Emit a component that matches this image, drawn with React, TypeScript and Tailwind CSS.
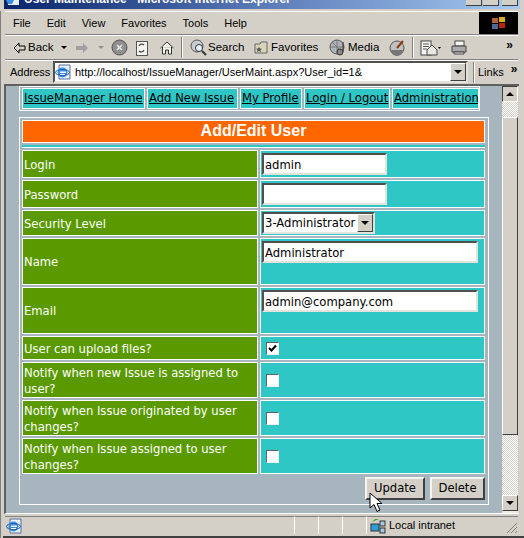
import React from 'react';

const ui = "font-['Liberation_Sans',sans-serif]";

function Sep() {
  return <div className="h-[21px] w-[2px] shrink-0 border-l border-r border-l-[#808080] border-r-white" />;
}

function IeIcon({ size = 16 }: { size?: number }) {
  return (
    <svg width={size} height={size} viewBox="0 0 16 16" className="shrink-0">
      <path d="M4 1h11v14H4z" fill="#e8eef8" stroke="#5a6f9a" />
      <circle cx="7.500" cy="8.500" r="5" fill="#3a8fe0" />
      <ellipse cx="7.500" cy="8.500" rx="7" ry="3" fill="none" stroke="#1c5fc0" />
      <rect x="5" y="7.500" width="6" height="1.500" fill="#fff" />
      <path d="M5 10.500h5" stroke="#fff" />
    </svg>
  );
}

function ToolbarIcons() {
  return (
    <div className="flex items-center h-[23px] pl-[8px] text-black">
      <svg width="13" height="12" viewBox="0 0 13 12" className="mr-[2px] shrink-0">
        <path d="M6 1 1 6l5 5V8h6V4H6z" fill="#d4d0c8" stroke="#000" />
      </svg>
      <span className="w-[24px]">Back</span>
      <span className="ml-[9px] mr-[8px] border-x-[3px] border-t-[3px] border-x-transparent border-t-black" />
      <svg width="14" height="12" viewBox="0 0 14 12" className="mr-[9px] shrink-0">
        <path d="M8 1l5 5-5 5V8H1V4h7z" fill="#a0a0a0" />
      </svg>
      <span className="mr-[7px] border-x-[3px] border-t-[3px] border-x-transparent border-t-[#909090]" />
      <svg width="17" height="17" viewBox="0 0 17 17" className="mr-[8px] shrink-0">
        <circle cx="8.500" cy="8.500" r="7.500" fill="#8f8f8f" stroke="#555" />
        <path d="M6 6l5 5M11 6l-5 5" stroke="#e8e8e8" strokeWidth="1.600" />
      </svg>
      <svg width="13" height="16" viewBox="0 0 13 16" className="mr-[11px] shrink-0">
        <rect x="0.500" y="1.500" width="11" height="14" fill="#f4f4f0" stroke="#555" />
        <path d="M3 6a3 3 0 0 1 5-1M8 10a3 3 0 0 1-5 1" fill="none" stroke="#4a4a4a" strokeWidth="1.300" />
      </svg>
      <svg width="14" height="15" viewBox="0 0 14 15" className="mr-[7px] shrink-0">
        <path d="M.5 8 7 2l6.500 6M2.500 7v7h3v-4h3v4h3V7" fill="#f4f4ec" stroke="#333" />
      </svg>
      <Sep />
      <svg width="17" height="17" viewBox="0 0 17 17" className="ml-[7px] mr-[1px] shrink-0">
        <circle cx="7" cy="7" r="6" fill="#c8ccd0" stroke="#555" />
        <circle cx="9" cy="9" r="3.500" fill="#e8f0f8" stroke="#333" />
        <path d="M12 12l4 4" stroke="#333" strokeWidth="2" />
      </svg>
      <span className="w-[36px]">Search</span>
      <svg width="15" height="15" viewBox="0 0 15 15" className="ml-[10px] mr-[2px] shrink-0">
        <path d="M1 4h5l1-2h6v11H1z" fill="#d8d4b8" stroke="#666" />
        <path d="M5 7l1 1.500 2 .2-1.500 1.300.5 2-2-1-2 1 .5-2L2 8.700l2-.2z" fill="#555" />
      </svg>
      <span className="w-[46px]">Favorites</span>
      <svg width="18" height="18" viewBox="0 0 18 18" className="ml-[12px] mr-[1px] shrink-0">
        <circle cx="8" cy="8" r="7" fill="#b0b4b8" stroke="#555" />
        <path d="M8 1v14M1 8h14M3 3l10 10" stroke="#777" />
        <circle cx="11" cy="13" r="3" fill="#888" stroke="#333" />
        <path d="M14 13V3" stroke="#333" />
      </svg>
      <span className="w-[28px]">Media</span>
      <svg width="17" height="17" viewBox="0 0 17 17" className="ml-[13px] mr-[6px] shrink-0">
        <circle cx="8" cy="9" r="7" fill="#c0c0c0" stroke="#555" />
        <path d="M8 9l6-7" stroke="#8a3a10" strokeWidth="2" />
        <path d="M2 11a6 6 0 0 0 12 0z" fill="#777" />
      </svg>
      <Sep />
      <svg width="21" height="16" viewBox="0 0 21 16" className="ml-[6px] mr-[10px] shrink-0">
        <rect x="1" y="1" width="10" height="14" fill="#f4f4f0" stroke="#444" />
        <path d="M3 4h6M3 6.500h6M3 9h4" stroke="#555" />
        <path d="M7 10l5-5 5 5v5H7z" fill="#e8e8e0" stroke="#444" />
        <path d="M18 7h3l-1.500 2z" />
      </svg>
      <svg width="16" height="15" viewBox="0 0 16 15" className="shrink-0">
        <rect x="4" y="1" width="9" height="5" fill="#f4f4f0" stroke="#444" />
        <path d="M1 6h14v6H1z" fill="#aaa" stroke="#444" />
        <path d="M3 12h10v2H3z" fill="#e8e8e8" stroke="#444" />
      </svg>
      <span className="ml-auto mr-[6px] mt-[-6px] text-[12px] font-bold tracking-[-1px]">»</span>
    </div>
  );
}

function DropButton({ className }: { className: string }) {
  return (
    <div className={`flex items-center justify-center bg-[#d4d0c8] border border-t-white border-l-white border-r-[#404040] border-b-[#404040] ${className}`}>
      <span className="border-x-[4px] border-t-[4px] border-x-transparent border-t-black" />
    </div>
  );
}

function NavCell({ children, className }: { children: React.ReactNode; className: string }) {
  return (
    <a className={`block h-[21px] shrink-0 border border-white bg-[#2fc6c6] pl-[1px] text-black underline whitespace-nowrap overflow-hidden leading-[18px] ${className}`}>{children}</a>
  );
}

function Row({ label, h, children, align = 'items-center' }: { label: React.ReactNode; h: string; children?: React.ReactNode; align?: string }) {
  return (
    <div className={`flex gap-[2px] ${h}`}>
      <div className="w-[236px] flex items-center border border-white bg-[#5a9a00] pl-[1px] pt-[1px] text-white leading-[16px]">
        <div>{label}</div>
      </div>
      <div className={`flex-1 flex ${align} border border-white bg-[#2fc6c6] pl-[1px]`}>{children}</div>
    </div>
  );
}

function Field({ value, className }: { value?: string; className: string }) {
  return (
    <div className={`h-[22px] border-2 border-t-[#505050] border-l-[#505050] border-r-[#e4e2dc] border-b-[#e4e2dc] bg-white pl-[1px] text-black leading-[20px] ${className}`}>{value}</div>
  );
}

function Check({ checked }: { checked?: boolean }) {
  return (
    <div className="ml-[4px] w-[13px] h-[13px] border border-t-[#606060] border-l-[#606060] border-r-[#f0f0f0] border-b-[#f0f0f0] bg-white flex items-center justify-center">
      {checked && (
        <svg width="9" height="9" viewBox="0 0 9 9">
          <path d="M1 4l2.500 2.500L8 1.500" fill="none" stroke="#000" strokeWidth="2" />
        </svg>
      )}
    </div>
  );
}

function PushButton({ children, className }: { children: React.ReactNode; className: string }) {
  return (
    <div className={`h-[23px] border-2 border-t-[#f4f4f0] border-l-[#f4f4f0] border-r-[#404040] border-b-[#404040] bg-[#d4d0c8] text-black text-center leading-[19px] ${className}`}>{children}</div>
  );
}

export default function App() {
  return (
    <div className={`relative w-[524px] h-[538px] overflow-hidden bg-[#d4d0c8] flex flex-col text-[11px] ${ui}`}>
      {/* title bar, cut off by the top of the picture */}
      <div className="h-[9px] shrink-0 mx-[4px] flex items-start bg-gradient-to-r from-[#0a246a] via-[#5a7ab8] to-[#a6caf0] overflow-hidden">
        <svg width="15" height="6" viewBox="0 10 15 6" className="ml-[1px] mr-[4px] shrink-0">
          <path d="M3 10h11v5H3z" fill="#e8eef8" />
          <path d="M1 10h8l-2 4H3z" fill="#3a8fe0" />
        </svg>
        <span className="mt-[-8px] text-[12px] leading-[14px] font-bold text-white whitespace-nowrap">User Maintenance - Microsoft Internet Explorer</span>
        <div className="ml-auto flex gap-[1px] mr-[2px]">
          <div className="w-[16px] h-[6px] bg-[#d4d0c8] border-b border-r border-[#404040]" />
          <div className="w-[16px] h-[6px] bg-[#d4d0c8] border-b border-r border-[#404040]" />
          <div className="w-[16px] h-[6px] ml-[2px] bg-[#d4d0c8] border-b border-r border-[#404040]" />
        </div>
      </div>
      <div className="h-[2px] shrink-0" />

      {/* menu */}
      <div className="h-[24px] shrink-0 flex ml-[5px] mr-[6px] border-t border-t-white border-b border-b-[#808080]">
        <div className="flex flex-1 items-center gap-[16px] pl-[8px] text-black">
          <span>File</span><span>Edit</span><span>View</span><span>Favorites</span><span>Tools</span><span>Help</span>
        </div>
        <div className="w-[39px] bg-black flex items-center justify-center">
          <svg width="18" height="16" viewBox="0 0 18 16">
            <rect x="2" y="3" width="6" height="5" fill="#b0603a" />
            <rect x="9" y="2" width="6" height="5" fill="#d4b020" />
            <rect x="2" y="9" width="6" height="5" fill="#4a6a9a" />
            <rect x="9" y="8" width="6" height="5" fill="#c02010" />
          </svg>
        </div>
      </div>

      <div className="ml-[5px] mr-[6px] shrink-0 h-[24px] border-t border-t-white text-[11.500px]">
        <ToolbarIcons />
      </div>

      {/* address */}
      <div className="h-[25px] shrink-0 flex items-center ml-[5px] mr-[6px] border-t border-t-[#808080] shadow-[inset_0_1px_0_#fff]">
        <span className="ml-[5px] w-[38px] text-black">Address</span>
        <div className="ml-[5px] mr-[5px] h-[22px] w-[415px] flex items-center border-2 border-t-[#505050] border-l-[#505050] border-r-[#e4e2dc] border-b-[#e4e2dc] bg-white">
          <IeIcon />
          <span className="ml-[4px] text-black flex-1 whitespace-nowrap overflow-hidden">http://localhost/IssueManager/UserMaint.aspx?User_id=1&amp;</span>
          <DropButton className="w-[16px] h-[18px] shrink-0" />
        </div>
        <Sep />
        <span className="ml-[3px] text-black">Links</span>
        <span className="ml-[7px] mt-[-6px] text-[12px] font-bold tracking-[-1px] text-black">»</span>
      </div>

      {/* page + scrollbar */}
      <div className="h-[430px] shrink-0 flex ml-[4px] mr-[5px] border-t-2 border-l-2 border-t-[#606060] border-l-[#606060] border-b border-b-white">
        <div className="flex-1 min-w-0 bg-[#a6b5be] pl-[13px] font-['DejaVu_Sans',sans-serif] text-[11.600px]">
          <div className="w-[461px] h-[25px] flex items-center gap-[2px] border border-white pl-[2px]">
            <NavCell className="w-[123px]">IssueManager Home</NavCell>
            <NavCell className="w-[91px]">Add New Issue</NavCell>
            <NavCell className="w-[62px]">My Profile</NavCell>
            <NavCell className="w-[86px]">Login / Logout</NavCell>
            <NavCell className="w-[87px]">Administration</NavCell>
          </div>

          <div className="mt-[6px] w-[470px] h-[388px] border border-white pl-[2px] pt-[2px] pr-[3px] flex flex-col gap-[2px]">
            <div className="h-[23px] border border-white bg-[#ff6600] text-white text-center text-[16px] font-bold font-['Liberation_Sans',sans-serif] leading-[20px]">Add/Edit User</div>
            <div className="h-[3px] border-b border-white bg-[#2fc6c6]" />
            <Row label="Login" h="h-[28px]"><Field value="admin" className="w-[125px]" /></Row>
            <Row label="Password" h="h-[28px]"><Field className="w-[125px]" /></Row>
            <Row label="Security Level" h="h-[26px]">
              <div className="w-[113px] h-[22px] flex items-center border-2 border-t-[#505050] border-l-[#505050] border-r-[#e4e2dc] border-b-[#e4e2dc] bg-white text-black">
                <span className="pl-[1px] pt-[1px] flex-1 whitespace-nowrap overflow-hidden">3-Administrator</span>
                <DropButton className="w-[16px] h-[18px] shrink-0" />
              </div>
            </Row>
            <Row label="Name" h="h-[47px]" align="items-start"><Field value="Administrator" className="w-[216px] mt-[2px]" /></Row>
            <Row label="Email" h="h-[47px]" align="items-start"><Field value="admin@company.com" className="w-[216px] mt-[2px]" /></Row>
            <Row label="User can upload files?" h="h-[24px]"><Check checked /></Row>
            <Row label={<>Notify when new Issue is assigned to<br />user?</>} h="h-[36px]"><Check /></Row>
            <Row label={<>Notify when Issue originated by user<br />changes?</>} h="h-[36px]"><Check /></Row>
            <Row label={<>Notify when Issue assigned to user<br />changes?</>} h="h-[36px]"><Check /></Row>
            <div className="flex justify-end gap-[5px] mt-[1px]">
              <PushButton className="w-[60px]">Update</PushButton>
              <PushButton className="w-[55px]">Delete</PushButton>
            </div>
          </div>
        </div>

        {/* scrollbar */}
        <div className="w-[16px] shrink-0 mr-[1px] flex flex-col bg-[#ecebe7]">
          <DropButton className="h-[16px] rotate-180" />
          <div className="h-[15px] bg-[repeating-conic-gradient(#d4d0c8_0_25%,#ffffff_0_50%)] bg-[length:2px_2px]" />
          <div className="h-[318px] bg-[#d4d0c8] border border-t-white border-l-white border-r-[#404040] border-b-[#404040]" />
          <div className="flex-1 bg-[repeating-conic-gradient(#d4d0c8_0_25%,#ffffff_0_50%)] bg-[length:2px_2px]" />
          <DropButton className="h-[16px] mb-[2px]" />
        </div>
      </div>

      {/* status bar */}
      <div className="h-[18px] shrink-0 flex items-stretch ml-[5px] mr-[6px] mt-[2px] text-black">
        <div className="flex items-center w-[290px] pl-[1px] border-t border-t-[#808080] border-r border-r-white"><IeIcon /></div>
        <div className="w-[24px] border-t border-t-[#808080] border-r border-r-white" />
        <div className="w-[24px] border-t border-t-[#808080] border-r border-r-white" />
        <div className="w-[24px] border-t border-t-[#808080] border-r border-r-white" />
        <div className="flex-1 flex items-center pl-[3px] border-t border-t-[#808080]">
          <svg width="16" height="16" viewBox="0 0 16 16" className="mr-[3px]">
            <rect x="1" y="6" width="8" height="7" fill="#28a0d8" stroke="#333" />
            <rect x="10" y="3" width="5" height="5" fill="#a8c8e0" stroke="#333" />
            <rect x="10" y="10" width="5" height="5" fill="#a8c8e0" stroke="#333" />
            <path d="M2 4l3-3h4z" fill="#3aa020" />
          </svg>
          <span>Local intranet</span>
          <svg width="12" height="12" viewBox="0 0 12 12" className="ml-auto self-end">
            <path d="M11 1 1 11M11 5l-6 6M11 9l-2 2" stroke="#808080" />
          </svg>
        </div>
      </div>
      <div className="absolute left-0 right-0 bottom-0 h-[2px] bg-[#404040]" />
      <div className="absolute top-[11px] bottom-0 left-0 w-[3px] border-l border-[#808080] bg-[#d4d0c8]" />

      {/* mouse cursor over the page */}
      <svg width="13" height="21" viewBox="0 0 13 21" className="absolute left-[369px] top-[492px]">
        <path d="M1 1v15l4-3.500 3 7 3-1.500-3-6.500h5z" fill="#fff" stroke="#000" />
      </svg>
    </div>
  );
}
